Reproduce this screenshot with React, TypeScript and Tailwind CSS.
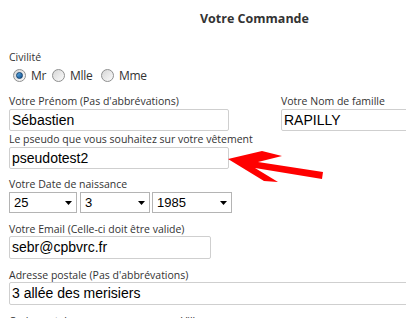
const label = "block text-[10.5px] leading-[14px] text-[#333]";
const input =
  "flex h-[22px] items-center rounded-[2px] border border-[#cfcfcf] bg-white pl-[2px] font-['Liberation_Sans',Arial,sans-serif] text-[14px] text-black";

function Radio({ checked, text, width }: { checked?: boolean; text: string; width: string }) {
  return (
    <label className={`flex items-center ${width}`}>
      <span className="flex h-[13px] w-[13px] shrink-0 items-center justify-center rounded-full border border-[#8e8f8f] bg-gradient-to-br from-[#d6d6d6] to-[#fbfbfb]">
        {checked && (
          <span className="h-[7px] w-[7px] rounded-full border border-[#0f3f6e] bg-gradient-to-br from-[#5fb0ea] to-[#11508e]" />
        )}
      </span>
      <span className="mt-[2px] ml-[5px] text-[12px] leading-[16px] tracking-[-0.3px] text-[#333]">{text}</span>
    </label>
  );
}

function Select({ value, width }: { value: string; width: string }) {
  return (
    <div
      className={`flex h-[21px] items-center justify-between border border-[#b4b4b4] bg-white pl-[4px] pr-[4px] font-['Liberation_Sans',Arial,sans-serif] text-[13px] text-black ${width}`}
    >
      <span>{value}</span>
      <svg width="7" height="4" viewBox="0 0 7 4">
        <polygon points="0,0 7,0 3.5,4" fill="#000" />
      </svg>
    </div>
  );
}

export default function App() {
  return (
    <div className="relative h-[318px] w-[406px] overflow-hidden bg-white font-['Open_Sans',sans-serif]">
      <div className="pt-[10px] pl-[9px]">
        <h1 className="pl-[191px] text-[12.5px] leading-[18px] font-bold text-[#333]">Votre Commande</h1>

        <span className={`${label} mt-[22px]`}>Civilité</span>
        <div className="mt-[3px] flex h-[16px] items-center pl-[4px]">
          <Radio checked text="Mr" width="w-[39px]" />
          <Radio text="Mlle" width="w-[49px]" />
          <Radio text="Mme" width="w-[60px]" />
        </div>

        <div className="mt-[11px] flex gap-[52px]">
          <div className="w-[220px] shrink-0">
            <span className={label}>Votre Prénom (Pas d'abbrévations)</span>
            <div className={`${input} mt-[1px]`}>Sébastien</div>
          </div>
          <div className="w-[200px] shrink-0">
            <span className={label}>Votre Nom de famille</span>
            <div className={`${input} mt-[1px]`}>RAPILLY</div>
          </div>
        </div>

        <span className={`${label} mt-[1px]`}>Le pseudo que vous souhaitez sur votre vêtement</span>
        <div className={`${input} mt-[1px] w-[220px]`}>pseudotest2</div>

        <span className={`${label} mt-[8px]`}>Votre Date de naissance</span>
        <div className="mt-[1px] flex">
          <Select value="25" width="w-[68px]" />
          <div className="ml-[3px]">
            <Select value="3" width="w-[70px]" />
          </div>
          <div className="ml-[2px]">
            <Select value="1985" width="w-[80px]" />
          </div>
        </div>

        <span className={`${label} mt-[9px]`}>Votre Email (Celle-ci doit être valide)</span>
        <div className={`${input} h-[23px] w-[202px]`}>sebr@cpbvrc.fr</div>

        <span className={`${label} mt-[9px]`}>Adresse postale (Pas d'abbrévations)</span>
        <div className={`${input} h-[23px] w-[420px]`}>3 allée des merisiers</div>

        <div className="mt-[9px] flex">
          <span className={`${label} w-[172px]`}>Code postal</span>
          <span className={label}>Ville</span>
        </div>
      </div>

      <svg className="pointer-events-none absolute top-0 left-0" width="406" height="318">
        <polygon
          points="228,159 262,151 282,156 258,162 323,172 322,179 255,168 278,182 264,181"
          fill="#ff0000"
        />
      </svg>
    </div>
  );
}
